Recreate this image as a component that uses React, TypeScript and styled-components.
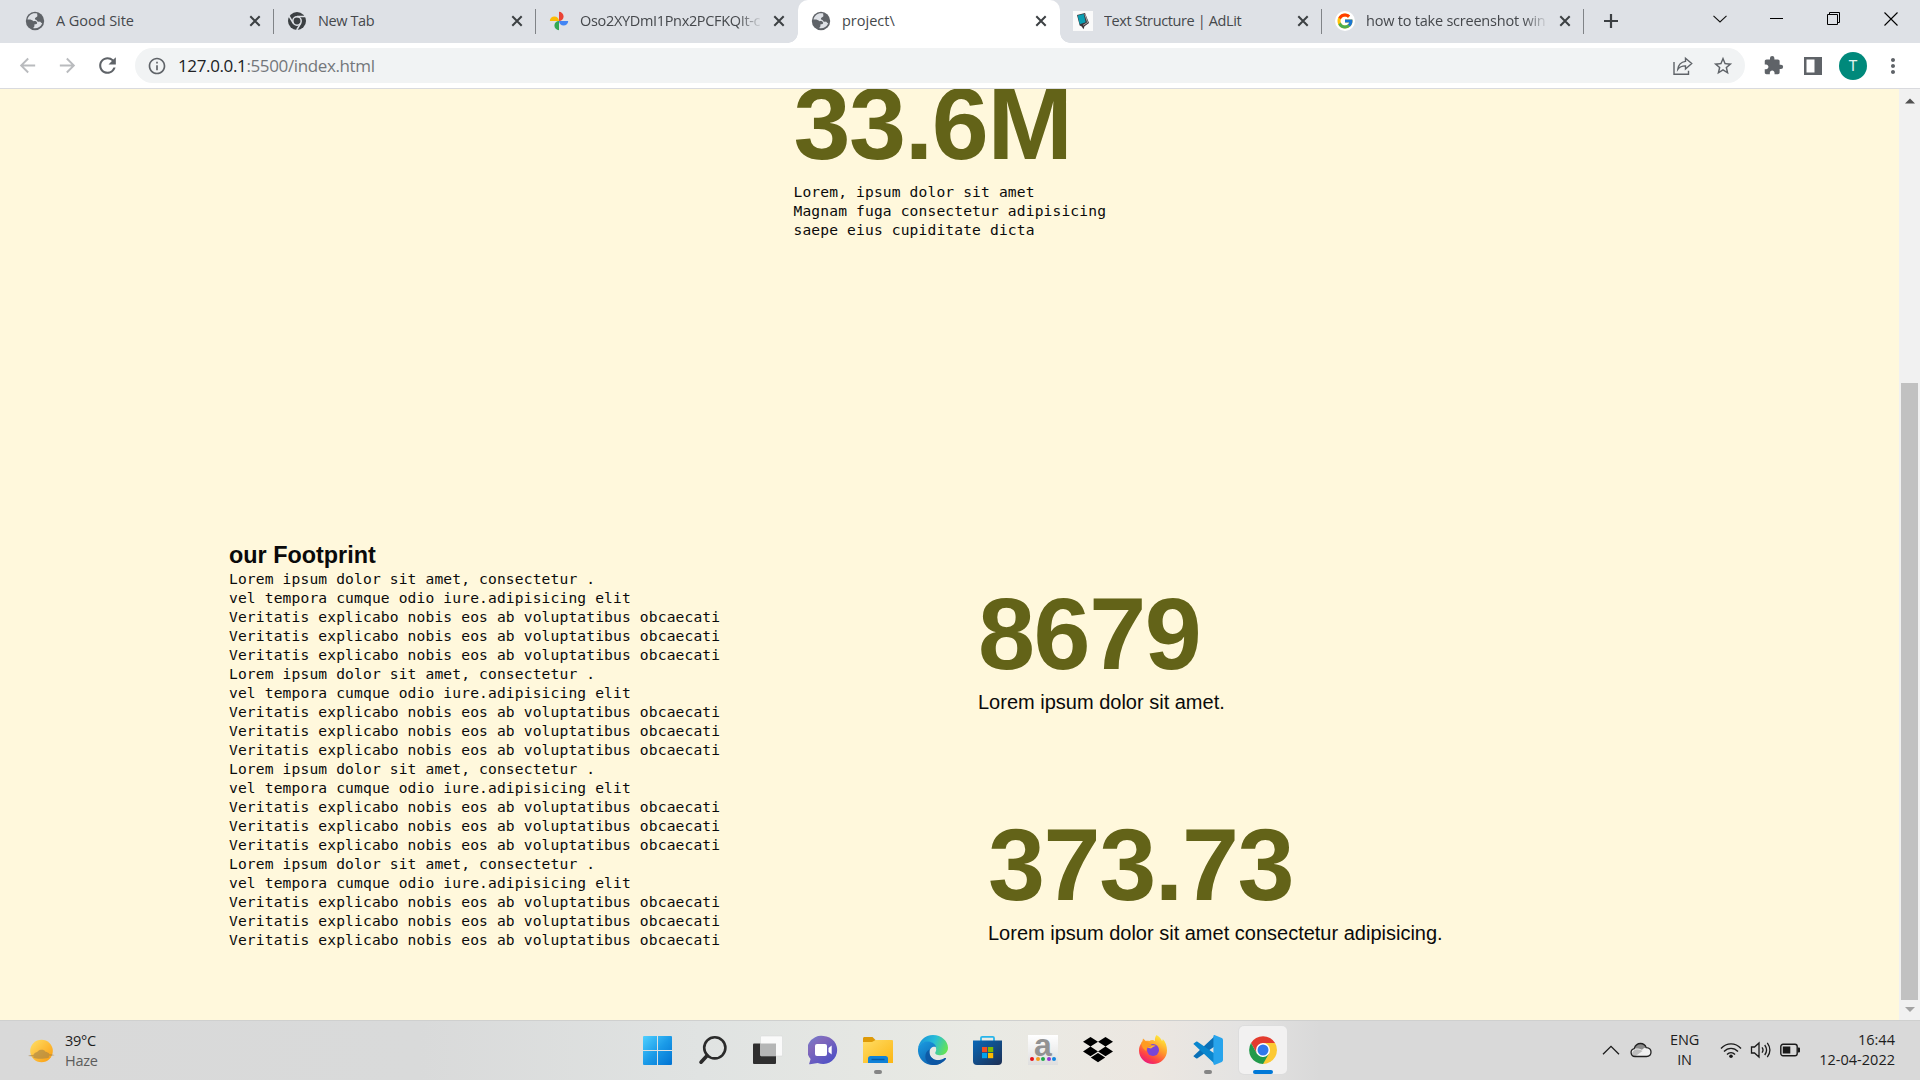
import React from "react";
import styled, { createGlobalStyle } from "styled-components";
import { FcGoogle } from "react-icons/fc";
import { MdExtension, MdArrowBack, MdArrowForward, MdRefresh, MdInfoOutline, MdStarBorder, MdMoreVert } from "react-icons/md";

const Global = createGlobalStyle`
  html, body { margin: 0; padding: 0; overflow: hidden; }
  * { box-sizing: border-box; }
  svg { display: block; flex: none; }
`;

const Screen = styled.div`
  width: 1920px;
  height: 1080px;
  display: flex;
  flex-direction: column;
  overflow: hidden;
  font-family: "Open Sans", "Noto Sans", sans-serif;
`;

/* ---------- tab strip ---------- */
const TabStrip = styled.div`
  height: 43px;
  flex: none;
  display: flex;
  background: #dee1e6;
  padding-left: 12px;
`;

const Tab = styled.div<{ $active?: boolean }>`
  position: relative;
  width: 262px;
  height: 43px;
  display: flex;
  align-items: center;
  padding: 0 9px 1px 13px;
  background: ${(p) => (p.$active ? "#fff" : "transparent")};
  border-radius: 10px 10px 0 0;
  &::before, &::after {
    content: "";
    display: ${(p) => (p.$active ? "block" : "none")};
    position: absolute;
    bottom: 0;
    width: 10px;
    height: 10px;
  }
  &::before { left: -10px; background: radial-gradient(circle at 0 0, transparent 9.5px, #fff 10px); }
  &::after { right: -10px; background: radial-gradient(circle at 100% 0, transparent 9.5px, #fff 10px); }
`;

const TabTitle = styled.span<{ $spacing: number; $fade?: boolean }>`
  flex: 1;
  min-width: 0;
  margin-left: 11px;
  font-size: 14.5px;
  line-height: 20px;
  letter-spacing: ${(p) => p.$spacing}px;
  color: #45484c;
  white-space: nowrap;
  overflow: hidden;
  ${(p) => p.$fade && "mask-image: linear-gradient(90deg, #000 86%, transparent 100%);"}
`;

const TabClose = styled.div`
  width: 20px;
  display: flex;
  justify-content: center;
  margin-left: 6px;
`;

const TabDivider = styled.div<{ $hidden?: boolean }>`
  width: 1px;
  height: 25px;
  margin: 9px 0 0 -1px;
  background: ${(p) => (p.$hidden ? "transparent" : "#808387")};
`;

const StripButton = styled.div<{ $width: number; $raise?: number }>`
  width: ${(p) => p.$width}px;
  height: ${(p) => 42 - (p.$raise ?? 0)}px;
  display: flex;
  align-items: center;
  justify-content: center;
`;

const Spacer = styled.div`
  flex: 1;
`;

/* ---------- toolbar ---------- */
const Toolbar = styled.div`
  height: 46px;
  flex: none;
  display: flex;
  align-items: center;
  background: #fff;
  border-bottom: 1px solid #d9dade;
  padding-left: 7px;
`;

const NavButton = styled.div<{ $color: string }>`
  width: 40px;
  display: flex;
  justify-content: center;
  color: ${(p) => p.$color};
`;

const Omnibox = styled.div`
  width: 1610px;
  height: 35px;
  margin-left: 8px;
  padding: 0 2px 0 12px;
  display: flex;
  align-items: center;
  background: #f1f3f4;
  border-radius: 18px;
  color: #5f6368;
`;

const Url = styled.div`
  margin-left: 11px;
  flex: 1;
  font-size: 17px;
  line-height: 24px;
  letter-spacing: -0.37px;
  color: #74777b;
  b { font-weight: 400; color: #202124; }
`;

const OmniAction = styled.div`
  width: 40px;
  display: flex;
  justify-content: center;
`;

const ToolAction = styled.div`
  width: 40px;
  display: flex;
  justify-content: center;
  color: #5f6368;
`;

const ToolActions = styled.div`
  display: flex;
  align-items: center;
  margin-left: 8px;
`;

const Avatar = styled.div`
  width: 28px;
  height: 28px;
  border-radius: 50%;
  background: #00897b;
  color: #e4f4f1;
  font: 15px/28px Roboto, sans-serif;
  text-align: center;
`;

/* ---------- page ---------- */
const Viewport = styled.div`
  height: 931px;
  flex: none;
  display: flex;
  background: #fff8dc;
`;

const Page = styled.main`
  flex: 1;
  height: 931px;
  overflow: hidden;
  color: #0a0a0a;
  font-family: "Liberation Sans", Arial, sans-serif;
`;

const Stat = styled.section`
  display: flex;
  flex-direction: column;
`;

const Hero = styled(Stat)`
  margin: -23px 0 0 793.5px;
  height: 476px;
  gap: 1px;
`;

const Figure = styled.div`
  font-size: 102.5px;
  line-height: 115px;
  letter-spacing: -1.4px;
  font-weight: 700;
  color: #636318;
`;

const Mono = styled.pre`
  margin: 0;
  font-family: "DejaVu Sans Mono", monospace;
  font-size: 14.6px;
  letter-spacing: 0.145px;
  line-height: 19px;
`;

const Caption = styled.p`
  margin: 0;
  font-size: 20px;
  line-height: 22px;
`;

const Columns = styled.div`
  display: flex;
  padding-left: 229px;
`;

const Footprint = styled.section`
  width: 749px;
`;

const Heading = styled.h3`
  margin: 0;
  font-size: 23.4px;
  line-height: 27px;
`;

const Figures = styled.div`
  display: flex;
  flex-direction: column;
  gap: 94px;
  padding-top: 34px;
`;

const Indented = styled(Stat)`
  margin-left: 10px;
`;

const Scrollbar = styled.div`
  width: 21px;
  display: flex;
  flex-direction: column;
  align-items: center;
  justify-content: space-between;
  background: #f1f1f1;
  padding: 9px 0 7px;
`;

const Thumb = styled.div`
  width: 17px;
  height: 617px;
  margin-top: 272px;
  background: #c1c1c1;
`;

/* ---------- taskbar ---------- */
const Taskbar = styled.footer`
  height: 60px;
  flex: none;
  display: grid;
  grid-template-columns: 634px 660px 1fr;
  border-top: 1px solid #cfd0cf;
  background: linear-gradient(90deg, #d9d9d9 0, #d9dada 420px, #e0e3e2 700px, #e9eae4 980px, #ece7e1 1150px, #e4e3e2 1240px, #d9d9d9 1320px);
`;

const Weather = styled.div`
  display: flex;
  align-items: center;
  gap: 10px;
  padding-left: 27px;
`;

const TwoLines = styled.div<{ $align?: string; $muted?: boolean; $spacing?: number }>`
  display: flex;
  flex-direction: column;
  text-align: ${(p) => p.$align ?? "left"};
  font-size: 14.5px;
  line-height: 20px;
  letter-spacing: ${(p) => p.$spacing ?? -0.4}px;
  color: #1d1d1d;
  white-space: nowrap;
  span:last-child { color: ${(p) => (p.$muted ? "#5c5c5c" : "#1d1d1d")}; }
`;

const Apps = styled.div`
  display: flex;
  gap: 7px;
  padding-top: 5px;
`;

const AppButton = styled.div<{ $active?: boolean }>`
  width: 48px;
  height: 48px;
  display: flex;
  flex-direction: column;
  align-items: center;
  padding-top: 9px;
  border-radius: 5px;
  background: ${(p) => (p.$active ? "#f2f1f1" : "transparent")};
  box-shadow: ${(p) => (p.$active ? "0 0 0 1px #dddddd" : "none")};
`;

const Indicator = styled.div<{ $wide?: boolean }>`
  width: ${(p) => (p.$wide ? 20 : 8)}px;
  height: 4px;
  margin-top: 5px;
  border-radius: 2px;
  background: ${(p) => (p.$wide ? "#0078d7" : "#858585")};
`;

const Tray = styled.div`
  display: flex;
  align-items: center;
  justify-content: flex-end;
  padding: 0 25px 1px 0;
`;

const TrayGroup = styled.div<{ $gap: number; $right: number; $left?: number }>`
  display: flex;
  align-items: center;
  gap: ${(p) => p.$gap}px;
  margin-left: ${(p) => p.$left ?? 0}px;
  margin-right: ${(p) => p.$right}px;
`;

/* ---------- icons ---------- */
const Globe = () => (
  <svg width="20" height="20" viewBox="0 0 20 20">
    <circle cx="10" cy="10" r="9.2" fill="#5f6368" />
    <path d="M12.2 2.6C8 1 3.4 4 2.5 8.6c2.3-.4 4.7.1 6 1.6 1.7-.5 3.2 0 3.6 1.6.3 1.4-1.1 1.5-2.6 1.5-.2 1.5.2 3-1.5 3.8 3.6 1 7.8-1 9.2-4.9-1-.1-1.5-.7-2.2-1.6-1.2.5-2.7.1-3-.9-.4-1.2-2-.8-2.1-2 0-1.2 1.6-1.2 2.3-2.2.5-.8-.2-1.8 0-2.9z" fill="#dee1e6" />
  </svg>
);

const ChromeMono = () => (
  <svg width="20" height="20" viewBox="0 0 20 20">
    <circle cx="10" cy="10" r="9" fill="#3c4043" />
    <circle cx="10" cy="10" r="4.2" fill="none" stroke="#dee1e6" strokeWidth="1.5" />
    <path d="M10 5.6h8M6.2 12.2 2.1 5.2M13.8 12.2 9.7 19" stroke="#dee1e6" strokeWidth="1.5" />
  </svg>
);

const Photos = () => (
  <svg width="20" height="20" viewBox="0 0 20 20">
    <path d="M10 .8V10a4.6 4.6 0 0 0 0-9.2z" fill="#ea4335" />
    <path d="M10 10h9.2a4.6 4.6 0 0 1-9.2 0z" fill="#4285f4" />
    <path d="M10 10v9.2a4.6 4.6 0 0 1 0-9.2z" fill="#34a853" />
    <path d="M10 10H.8a4.6 4.6 0 0 1 9.2 0z" fill="#fbbc04" />
  </svg>
);

const AdLit = () => (
  <svg width="20" height="20" viewBox="0 0 20 20">
    <path fill="#fafafa" d="M0 0h20v20H0z" />
    <path d="m4 4 8-2 4 10-4.5 3.2-1 3-1.8-2.7-2-1z" fill="#3b3439" />
    <path d="m4.7 4.5 6-1.5 2 8.3-6 2z" fill="#0b9eb2" />
    <path d="m11.8 3.2 2.8 8.3-4.6 2.8" stroke="#d8d8d8" strokeWidth=".7" fill="none" />
  </svg>
);

const GoogleBadge = styled.div`
  width: 20px;
  height: 20px;
  border-radius: 50%;
  background: #fff;
  display: flex;
  align-items: center;
  justify-content: center;
`;

const CloseGlyph = () => (
  <svg width="12" height="12" viewBox="0 0 12 12">
    <path d="m1.3 1.3 9.4 9.4m0-9.4-9.4 9.4" stroke="#3c4043" strokeWidth="2" />
  </svg>
);

const ShareGlyph = () => (
  <svg width="20" height="20" viewBox="0 0 20 20" fill="none" stroke="#5f6368" strokeWidth="1.4">
    <path d="M1 6v12.3h14.5v-3.5" />
    <path d="M12.5 2.2 18.7 7.5 12.5 13V9.9C9 9.8 6.7 10.8 4.8 13.4c.5-4.4 3-7.4 7.7-8z" />
  </svg>
);

const Arrow = ({ down }: { down?: boolean }) => (
  <svg width="10" height="6" viewBox="0 0 10 6">
    <path d={down ? "M0 0h10L5 5z" : "M0 5.5h10L5 .5z"} fill={down ? "#a3a3a3" : "#505050"} />
  </svg>
);

const Haze = () => (
  <svg width="28" height="28" viewBox="0 0 28 28">
    <defs>
      <linearGradient id="sun" x1="0" y1="0" x2="1" y2="1">
        <stop offset="0" stopColor="#ffe066" />
        <stop offset="1" stopColor="#fb9a0c" />
      </linearGradient>
    </defs>
    <circle cx="14.5" cy="14" r="11.3" fill="url(#sun)" />
    <path d="M1 19c2-1 4-1 5.5-1.2 1-2.3 3.5-2.5 4.500-3.500 2-2 6-2 7.500.5 1.800.3 3.500 1.200 4 2.500 2 0 3.500.2 5 .9-2.500.7-4.500.4-6 .8 1 .6 1.500 1 0 1.800-4.500 1.300-12 1.500-15 0-1-.7 0-1 .5-1.300C5 19.300 3 19.300 1 19z" fill="#a98546" opacity=".65" />
  </svg>
);

const Start = () => (
  <svg width="30" height="30" viewBox="0 0 30 30">
    <defs>
      <linearGradient id="win" x1="0" y1="0" x2="1" y2="1" gradientUnits="objectBoundingBox">
        <stop offset="0" stopColor="#4fd0ff" />
        <stop offset=".5" stopColor="#1b9be8" />
        <stop offset="1" stopColor="#0072d2" />
      </linearGradient>
    </defs>
    <path d="M1 1h13v14H0V2a1 1 0 0 1 1-1zM15 1h13a1 1 0 0 1 1 1v13H15zM0 16h14v14H1a1 1 0 0 1-1-1zM15 16h14v13a1 1 0 0 1-1 1H15z" fill="url(#win)" />
  </svg>
);

const Search = () => (
  <svg width="30" height="30" viewBox="0 0 30 30" fill="none" stroke="#2b2b2b">
    <circle cx="16.8" cy="12.8" r="10.6" strokeWidth="2.6" />
    <path d="M9.2 20.500 3 27.200" strokeWidth="3.6" strokeLinecap="round" />
  </svg>
);

const TaskView = () => (
  <svg width="30" height="30" viewBox="0 0 30 30">
    <rect x="0" y="8.5" width="23" height="20.5" rx="1" fill="#2f2f2f" />
    <rect x="7.5" y="1" width="22" height="20" rx="1" fill="#fafafa" stroke="#d5d7d7" strokeWidth=".5" />
    <path d="M7.5 8.5H23V21H8.500a1 1 0 0 1-1-1z" fill="#b5b6b6" />
  </svg>
);

const Chat = () => (
  <svg width="30" height="30" viewBox="0 0 30 30">
    <defs>
      <linearGradient id="chat" x1="0" y1="0" x2=".8" y2="1">
        <stop offset="0" stopColor="#6f7fd0" />
        <stop offset=".35" stopColor="#8168bb" />
        <stop offset="1" stopColor="#4c4fc6" />
      </linearGradient>
    </defs>
    <path d="M15.5 1a14 14 0 1 1-5.800 26.900L2 29.300c-1 .1-1-.6-.6-1.300l1.200-4A14 14 0 0 1 15.500 1z" fill="url(#chat)" />
    <rect x="7" y="9" width="12" height="12" rx="2" fill="#fff" />
    <path d="m20.500 13 3.200-2.600v9.200L20.500 17z" fill="#fff" />
  </svg>
);

const Explorer = () => (
  <svg width="30" height="30" viewBox="0 0 30 30">
    <defs>
      <linearGradient id="folder" x1="0" y1="0" x2="1" y2="1">
        <stop offset="0" stopColor="#ffdc64" />
        <stop offset="1" stopColor="#fcb613" />
      </linearGradient>
    </defs>
    <path d="M0 3.500C0 2.500.7 2 1.500 2H9.500l3.500 3.500V9H0z" fill="#de9a08" />
    <path d="M0 7h9l3.500-2H29a1 1 0 0 1 1 1v22H0z" fill="url(#folder)" />
    <path d="M5 28v-4.500C5 22 6 21 7.500 21h15c1.500 0 2.500 1 2.500 2.500V28z" fill="#1082d8" />
    <path d="M8.500 24.500h13" stroke="#075aa4" strokeWidth="1.4" />
  </svg>
);

const Edge = () => (
  <svg width="30" height="30" viewBox="0 0 30 30">
    <defs>
      <linearGradient id="edgeTop" x1="0" y1=".3" x2="1" y2=".6">
        <stop offset="0" stopColor="#1893d8" />
        <stop offset=".5" stopColor="#28bdd8" />
        <stop offset="1" stopColor="#66e354" />
      </linearGradient>
      <linearGradient id="edgeLow" x1="0" y1="0" x2=".8" y2="1">
        <stop offset="0" stopColor="#1b9de2" />
        <stop offset="1" stopColor="#0b58a7" />
      </linearGradient>
    </defs>
    <path d="M0 14C.8 6 7 0 15 0c8.500 0 15 6.200 15 12.800 0 4.600-3.600 7.400-7.500 7.400-3.800 0-5.700-1.500-5.200-2.800.6-1 .9-1.800.9-3C18.200 10 14 7 9.500 7 5 7 1 10 0 14z" fill="url(#edgeTop)" />
    <path d="M0 14c.8-5 5-7.500 9.500-7.500 4.600 0 8 2.500 8.700 5.500-3-1.200-6.700.8-6.700 5.200 0 5.300 5 8.600 10 7.900 2.500-.3 4.300-1.300 5.500-2 .8-.4 1.200 0 .8.800C25 27.600 20.500 30 15 30 6 30-.6 22.500 0 14z" fill="url(#edgeLow)" />
    <path d="M11.500 17.200c0 5.300 5 8.600 10 7.900 2.500-.3 4.300-1.300 5.500-2 .8-.4 1.200 0 .8.800-2.800 4.100-8.300 6.200-13.300 6.100-9-2-9-13-3-15.600z" fill="#0c54a0" opacity=".8" />
  </svg>
);

const Store = () => (
  <svg width="30" height="30" viewBox="0 0 30 30">
    <defs>
      <linearGradient id="bag" x1="0" y1="0" x2="1" y2="1">
        <stop offset="0" stopColor="#0868b8" />
        <stop offset="1" stopColor="#1d2f53" />
      </linearGradient>
    </defs>
    <path d="M8 9V3c0-.8.4-1.200 1.200-1.200h10.600c.8 0 1.200.4 1.200 1.200v6" fill="none" stroke="#28b5ea" strokeWidth="1.8" />
    <path d="M0 5.500h29V26a4 4 0 0 1-4 4H4a4 4 0 0 1-4-4z" fill="url(#bag)" />
    <path d="M9 12h5.200v5.200H9z" fill="#f25022" />
    <path d="M15 12h5.200v5.200H15z" fill="#7fba00" />
    <path d="M9 18h5.200v5.200H9z" fill="#00a4ef" />
    <path d="M15 18h5.200v5.200H15z" fill="#ffb900" />
  </svg>
);

const AmazonTile = styled.div`
  width: 30px;
  height: 30px;
  display: flex;
  flex-direction: column;
  align-items: center;
  background: linear-gradient(#fff, #dedede);
  font: 700 32px/20px "Liberation Sans", Arial, sans-serif;
  color: #929292;
`;

const AmazonLetter = styled.span`
  height: 22px;
`;

const Dots = styled.div`
  display: flex;
  gap: 1.5px;
`;

const Dot = styled.i<{ $color: string }>`
  width: 4px;
  height: 4px;
  border-radius: 50%;
  background: ${(p) => p.$color};
`;

const Dropbox = () => (
  <svg width="30" height="30" viewBox="0 0 30 30">
    <path d="m7.500 2 7.500 4.800-7.500 4.800L0 6.800zM22.500 2 30 6.800l-7.500 4.800L15 6.800zM7.500 11.600l7.500 4.800-7.500 4.800L0 16.400zM22.500 11.600l7.500 4.800-7.500 4.800-7.500-4.800zM15 18l7.200 4.500L15 27.200l-7.200-4.700z" fill="#000" />
  </svg>
);

const Firefox = () => (
  <svg width="30" height="30" viewBox="0 0 30 30">
    <defs>
      <linearGradient id="fox" x1=".8" y1=".1" x2=".3" y2="1">
        <stop offset="0" stopColor="#ffe53b" />
        <stop offset=".4" stopColor="#ff9a2b" />
        <stop offset=".75" stopColor="#ff4544" />
        <stop offset="1" stopColor="#e9187c" />
      </linearGradient>
    </defs>
    <path d="M18.500 0c3.500 2 4.500 4 5.500 6 .8-.6.7-1.300.7-1.900C27.500 7 29 11 29 15.500 29 23 23 29 15 29S1 23 1 15.500C1 12 2 9.500 4.200 7.200L5 3.500c1 1 2 1.500 2.800 2.500 1-.3 2.200-.3 3.500 0C13 5 15 4.500 17 6c-.2-2.200 0-4 1.500-6z" fill="url(#fox)" />
    <circle cx="15" cy="15" r="6" fill="#7b45d8" />
    <path d="M3.500 7c4-1.500 8 1 10.500 3.500-1.500 1.500-4 1-5 2 0 1.500-.7 2-.7 3.500C5 14 3 11 3.500 7z" fill="#ff9b20" />
    <path d="M9 12.500c1.500-1 3.500-.5 5-2 1.500-.5 3 0 4 .5-2 0-3 1.300-5 2.500z" fill="#ffb52b" />
  </svg>
);

const VsCode = () => (
  <svg width="30" height="30" viewBox="0 0 30 30">
    <path d="M1 20.500 21.800 1l4 1.500v6L4.500 23.300c-.5.4-1 .4-1.400 0L1 21.800c-.6-.4-.6-.9 0-1.300z" fill="#0a70b7" />
    <path d="M1 9.500 21.800 29l4-1.500v-6L4.500 6.700c-.5-.4-1-.4-1.400 0L1 8.200c-.6.4-.6.9 0 1.300z" fill="#0a86ce" />
    <path d="m22 .2 6.800 2.900c.8.4 1.200 1 1.200 1.800v20.200c0 .8-.4 1.400-1.200 1.800L22 29.800c-.8.3-1.600-.3-1.600-1.200V1.400c0-.9.8-1.500 1.600-1.200z" fill="#28a4ec" />
  </svg>
);

const Chrome = () => (
  <svg width="30" height="30" viewBox="0 0 30 30">
    <path d="M15 15V8h12.100A14 14 0 0 1 15 29z" fill="#fcc934" />
    <path d="M8.900 18.500 3 8a14 14 0 0 1 24.100 0H15z" fill="#e33b2e" />
    <path d="M3 8A14 14 0 0 0 15 29l6-10.500-6 3.500-6.100-3.500z" fill="#219a4b" />
    <circle cx="15" cy="15" r="7" fill="#fff" />
    <circle cx="15" cy="15" r="5.5" fill="#3178ea" />
  </svg>
);

/* ---------- data ---------- */
const tabs = [
  { title: "A Good Site", icon: <Globe />, spacing: -0.05 },
  { title: "New Tab", icon: <ChromeMono />, spacing: -0.4 },
  { title: "Oso2XYDmI1Pnx2PCFKQIt-c", icon: <Photos />, spacing: -0.33, fade: true },
  { title: "project\\", icon: <Globe />, spacing: 0, active: true },
  { title: "Text Structure | AdLit", icon: <AdLit />, spacing: -0.38 },
  { title: "how to take screenshot win", icon: <GoogleBadge><FcGoogle size={18} /></GoogleBadge>, spacing: -0.22, fade: true },
];

const verse = [
  "Lorem ipsum dolor sit amet, consectetur .",
  "vel tempora cumque odio iure.adipisicing elit",
  "Veritatis explicabo nobis eos ab voluptatibus obcaecati",
  "Veritatis explicabo nobis eos ab voluptatibus obcaecati",
  "Veritatis explicabo nobis eos ab voluptatibus obcaecati",
].join("\n");

const amazonDots = ["#e8141b", "#f59b1b", "#20a84a", "#9335d2", "#1287e0"];

const apps = [
  { icon: <Start /> },
  { icon: <Search /> },
  { icon: <TaskView /> },
  { icon: <Chat /> },
  { icon: <Explorer />, running: true },
  { icon: <Edge /> },
  { icon: <Store /> },
  {
    icon: (
      <AmazonTile>
        <AmazonLetter>a</AmazonLetter>
        <Dots>{amazonDots.map((c) => <Dot key={c} $color={c} />)}</Dots>
      </AmazonTile>
    ),
  },
  { icon: <Dropbox /> },
  { icon: <Firefox /> },
  { icon: <VsCode />, running: true },
  { icon: <Chrome />, running: true, active: true },
];

export default function App() {
  return (
    <Screen>
      <Global />
      <TabStrip>
        {tabs.map((t, i) => (
          <React.Fragment key={t.title}>
            <Tab $active={t.active}>
              {t.icon}
              <TabTitle $spacing={t.spacing} $fade={t.fade}>{t.title}</TabTitle>
              <TabClose><CloseGlyph /></TabClose>
            </Tab>
            <TabDivider $hidden={i === 2 || i === 3} />
          </React.Fragment>
        ))}
        <StripButton $width={54}>
          <svg width="16" height="16" viewBox="0 0 16 16"><path d="M8 1v14M1 8h14" stroke="#3c4043" strokeWidth="2.2" /></svg>
        </StripButton>
        <Spacer />
        <StripButton $width={57} $raise={5}>
          <svg width="14" height="8" viewBox="0 0 14 8"><path d="m.5.8 6.500 6.200L13.500.8" stroke="#111" strokeWidth="1.1" fill="none" /></svg>
        </StripButton>
        <StripButton $width={57} $raise={5}>
          <svg width="13" height="1"><path d="M0 0h13v1H0z" fill="#000" /></svg>
        </StripButton>
        <StripButton $width={57} $raise={5}>
          <svg width="13" height="13" viewBox="0 0 13 13" fill="none" stroke="#000"><path d="M.5 2.500h10v10H.5zM2.500 2.500v-2h10v10h-2" /></svg>
        </StripButton>
        <StripButton $width={58} $raise={5}>
          <svg width="14" height="14" viewBox="0 0 14 14"><path d="m.5.5 13 13m0-13-13 13" stroke="#000" strokeWidth="1.1" /></svg>
        </StripButton>
      </TabStrip>

      <Toolbar>
        <NavButton $color="#b9bbbe"><MdArrowBack size={23} /></NavButton>
        <NavButton $color="#b9bbbe"><MdArrowForward size={23} /></NavButton>
        <NavButton $color="#5f6368"><MdRefresh size={25} /></NavButton>
        <Omnibox>
          <MdInfoOutline size={20} />
          <Url><b>127.0.0.1</b>:5500/index.html</Url>
          <OmniAction><ShareGlyph /></OmniAction>
          <OmniAction><MdStarBorder size={22} /></OmniAction>
        </Omnibox>
        <ToolActions>
          <ToolAction><MdExtension size={21} /></ToolAction>
          <ToolAction>
            <svg width="18" height="18" viewBox="0 0 18 18"><path d="M0 0h18v18H0zM2.500 2.500v13h8v-13z" fill="#5f6368" fillRule="evenodd" /></svg>
          </ToolAction>
          <ToolAction><Avatar>T</Avatar></ToolAction>
          <ToolAction><MdMoreVert size={24} /></ToolAction>
        </ToolActions>
      </Toolbar>

      <Viewport>
        <Page>
          <Hero>
            <Figure>33.6M</Figure>
            <Mono>{"Lorem, ipsum dolor sit amet\nMagnam fuga consectetur adipisicing\nsaepe eius cupiditate dicta"}</Mono>
          </Hero>
          <Columns>
            <Footprint>
              <Heading>our Footprint</Heading>
              {[0, 1, 2, 3].map((n) => <Mono key={n}>{verse}</Mono>)}
            </Footprint>
            <Figures>
              <Stat>
                <Figure>8679</Figure>
                <Caption>Lorem ipsum dolor sit amet.</Caption>
              </Stat>
              <Indented>
                <Figure>373.73</Figure>
                <Caption>Lorem ipsum dolor sit amet consectetur adipisicing.</Caption>
              </Indented>
            </Figures>
          </Columns>
        </Page>
        <Scrollbar>
          <Arrow />
          <Thumb />
          <Arrow down />
        </Scrollbar>
      </Viewport>

      <Taskbar>
        <Weather>
          <Haze />
          <TwoLines $muted $spacing={-0.3}>
            <span>39°C</span>
            <span>Haze</span>
          </TwoLines>
        </Weather>
        <Apps>
          {apps.map((a, i) => (
            <AppButton key={i} $active={a.active}>
              {a.icon}
              {a.running && <Indicator $wide={a.active} />}
            </AppButton>
          ))}
        </Apps>
        <Tray>
          <TrayGroup $gap={10} $right={18}>
            <svg width="18" height="10" viewBox="0 0 18 10"><path d="m1 9.300 8-8 8 8" stroke="#1a1a1a" strokeWidth="1.3" fill="none" /></svg>
            <svg width="22" height="16" viewBox="0 0 22 16">
              <path d="M5 14.500a4 4 0 0 1-.8-7.900C5.200 3.500 7.500 1.500 10.500 1.500c2.800 0 4.800 1.500 5.700 4.100 3 .2 4.800 2 4.800 4.500 0 2.600-1.900 4.400-4.500 4.400z" fill="#f1f1f1" />
              <path d="M4.200 6.600C5.200 3.500 7.500 1.500 10.500 1.500c2.800 0 4.800 1.500 5.700 4.100-1.700.2-3.200 1.200-4.200 2.200-2-1-4-1.500-7.800-1.200z" fill="#8b8b8b" />
              <path d="M2 12c0-2 2-4.400 5-4.700 2 0 4.500 1 5.500 1.700L5 14.500z" fill="#bdbdbd" />
              <path d="M5 14.500a4 4 0 0 1-.8-7.900C5.200 3.500 7.500 1.500 10.500 1.500c2.800 0 4.800 1.500 5.700 4.100 3 .2 4.800 2 4.800 4.500 0 2.600-1.900 4.400-4.500 4.400z" fill="none" stroke="#222" strokeWidth="1.3" />
            </svg>
          </TrayGroup>
          <TwoLines $align="center" $spacing={-0.1}>
            <span>ENG</span>
            <span>IN</span>
          </TwoLines>
          <TrayGroup $gap={8} $right={18} $left={21}>
            <svg width="22" height="17" viewBox="0 0 22 17" fill="none" stroke="#1a1a1a" strokeWidth="1.4">
              <path d="M1 6.500c5.700-6.200 14.300-6.200 20 0M4 9.600c4-4.300 10-4.300 14 0M7 12.500c2.400-2.500 5.600-2.500 8 0" />
              <circle cx="11" cy="14.3" r="1.8" fill="#1a1a1a" stroke="none" />
            </svg>
            <svg width="22" height="18" viewBox="0 0 22 18" fill="none" stroke="#1a1a1a" strokeWidth="1.3">
              <path d="M1.500 6v6h3L9 16V2L4.500 6zM12 6.300c1.300 1.700 1.300 3.700 0 5.400M14.700 4c2.400 3.200 2.400 6.800 0 10M17.300 1.800c3.500 4.800 3.500 9.600 0 14.400" />
            </svg>
            <svg width="21" height="14" viewBox="0 0 21 14">
              <rect x=".8" y="1.3" width="16.4" height="11.4" rx="2.2" fill="none" stroke="#1a1a1a" strokeWidth="1.4" />
              <path d="M2.800 3.500h7.500v7H2.800zM18 4.500h1a1 1 0 0 1 1 1v3a1 1 0 0 1-1 1h-1z" fill="#1a1a1a" />
            </svg>
          </TrayGroup>
          <TwoLines $align="right" $spacing={0.02}>
            <span>16:44</span>
            <span>12-04-2022</span>
          </TwoLines>
        </Tray>
      </Taskbar>
    </Screen>
  );
}
